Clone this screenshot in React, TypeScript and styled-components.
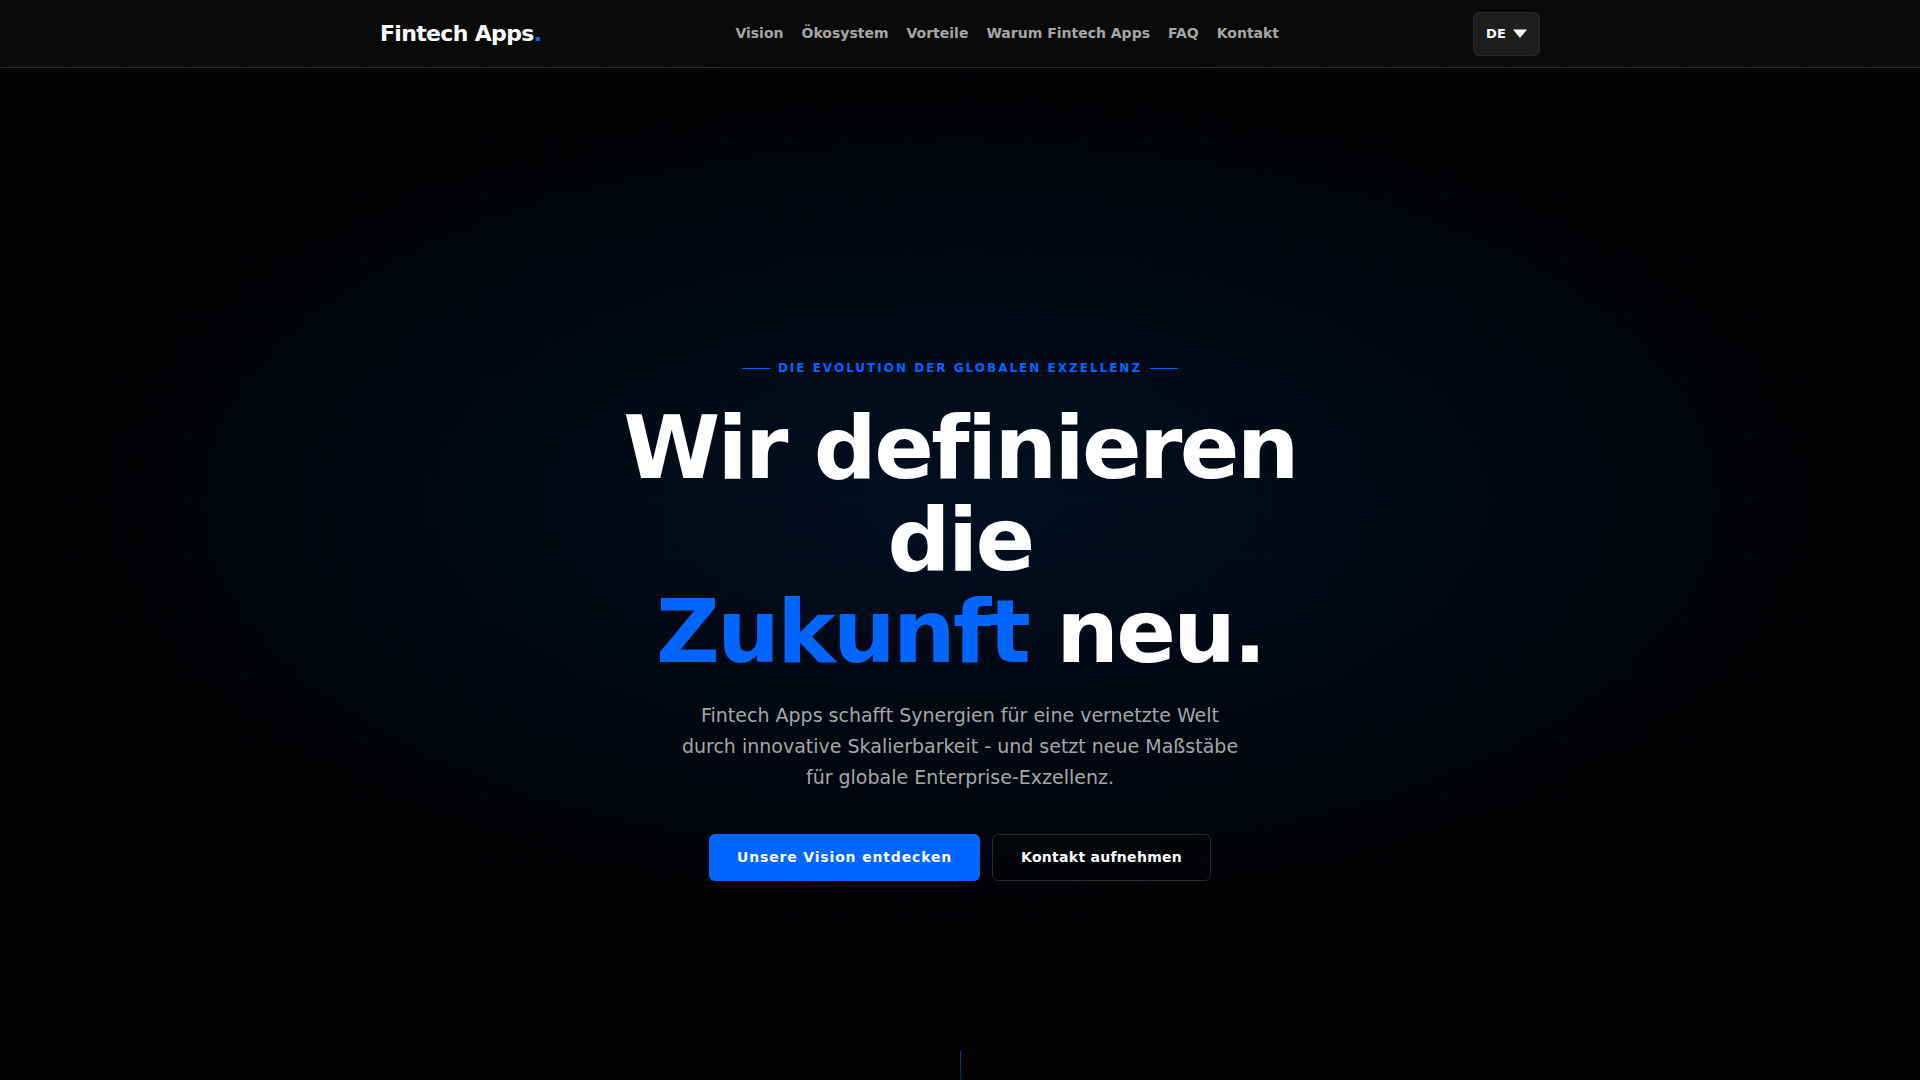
import React from "react";
import styled, { createGlobalStyle } from "styled-components";

const color = {
  accent: "#0066ff",
  text: "#ffffff",
  muted: "#a6a6a6",
  bar: "#0a0a0a",
  line: "#2a2a2a",
  field: "#1e1e1e",
};

const GlobalStyle = createGlobalStyle`
  *, *::before, *::after { box-sizing: border-box; }
  html { scrollbar-width: none; }
  body {
    margin: 0;
    background: #020202;
    color: ${color.text};
    font-family: "DejaVu Sans", sans-serif;
  }
`;

const Header = styled.header`
  position: sticky;
  top: 0;
  z-index: 10;
  background: ${color.bar};
  border-bottom: 1px solid ${color.line};
`;

const Bar = styled.div`
  max-width: 1200px;
  min-height: 67px;
  margin: 0 auto;
  padding: 0 20px;
  display: flex;
  align-items: center;
  justify-content: space-between;
`;

const Accent = styled.span`
  color: ${color.accent};
`;

const Logo = styled.a`
  color: ${color.text};
  font-size: 22px;
  font-weight: 700;
  letter-spacing: -0.03em;
  text-decoration: none;
`;

const Nav = styled.nav`
  display: flex;
  gap: 18px;
  padding-bottom: 2px;
`;

const NavLink = styled.a`
  color: ${color.muted};
  font-size: 14px;
  font-weight: 600;
  line-height: 20px;
  text-decoration: none;
`;

const LanguageField = styled.label`
  display: grid;
  grid-template-columns: 1fr;
  align-items: center;
  position: relative;
`;

const LanguageSelect = styled.select`
  appearance: none;
  width: 67px;
  height: 44px;
  padding: 0 12px;
  border: 1px solid ${color.line};
  border-radius: 6px;
  background: ${color.field};
  color: ${color.text};
  font: 700 13px/20px "DejaVu Sans", sans-serif;
  letter-spacing: 0.02em;
`;

const Caret = styled.svg`
  position: absolute;
  right: 13px;
  width: 14px;
  height: 9px;
  pointer-events: none;
`;

const Hero = styled.section`
  position: relative;
  min-height: 100vh;
  padding-top: 23px;
  display: flex;
  flex-direction: column;
  align-items: center;
  justify-content: center;
  text-align: center;
  background-image:
    linear-gradient(rgba(0, 102, 255, 0.025) 1px, transparent 1px),
    linear-gradient(90deg, rgba(0, 102, 255, 0.025) 1px, transparent 1px),
    radial-gradient(50% 42% at 50% 40%, rgba(0, 102, 255, 0.12) 0%, transparent 100%);
  background-size: 60px 60px, 60px 60px, 100% 100%;
  background-position: 7px 8px, 7px 8px, 0 0;
`;

const Content = styled.div`
  width: 100%;
  max-width: 820px;
  display: flex;
  flex-direction: column;
  align-items: center;
`;

const Eyebrow = styled.p`
  margin: 0 0 24px;
  display: flex;
  align-items: center;
  gap: 8px;
  color: ${color.accent};
  font-size: 12px;
  font-weight: 700;
  letter-spacing: 2px;
  line-height: 20px;
  text-transform: uppercase;

  &::before,
  &::after {
    content: "";
    width: 28px;
    height: 1px;
    background: ${color.accent};
  }
`;

const Title = styled.h1`
  margin: 0 0 22px;
  font-size: 88px;
  font-weight: 800;
  letter-spacing: -0.03em;
  line-height: 92px;
`;

const Lead = styled.p`
  max-width: 570px;
  margin: 0 0 41px;
  color: ${color.muted};
  font-size: 19px;
  line-height: 31px;
`;

const Actions = styled.div`
  display: flex;
  flex-wrap: wrap;
  justify-content: center;
  gap: 12px;
`;

const Button = styled.button<{ $primary?: boolean }>`
  min-height: 47px;
  padding: 0 28px 2px;
  border: ${(p) => (p.$primary ? "0" : `1px solid ${color.line}`)};
  border-radius: 6px;
  background: ${(p) => (p.$primary ? color.accent : "transparent")};
  color: ${color.text};
  font: 700 14px/20px "DejaVu Sans", sans-serif;
  letter-spacing: ${(p) => (p.$primary ? "0.06em" : "0.02em")};
  cursor: pointer;
`;

const ScrollHint = styled.div`
  position: absolute;
  bottom: 32px;
  left: 50%;
  width: 1px;
  height: 65px;
  background: linear-gradient(${color.accent}, transparent);
  opacity: 0.6;
`;

const links = [
  { label: "Vision", href: "#vision" },
  { label: "Ökosystem", href: "#oekosystem" },
  { label: "Vorteile", href: "#vorteile" },
  { label: "Warum Fintech Apps", href: "#warum" },
  { label: "FAQ", href: "#faq" },
  { label: "Kontakt", href: "#kontakt" },
];

export default function App() {
  return (
    <>
      <GlobalStyle />
      <Header>
        <Bar>
          <Logo href="#top">
            Fintech Apps<Accent>.</Accent>
          </Logo>
          <Nav>
            {links.map((link) => (
              <NavLink key={link.href} href={link.href}>
                {link.label}
              </NavLink>
            ))}
          </Nav>
          <LanguageField>
            <LanguageSelect aria-label="Sprache" defaultValue="de">
              <option value="de">DE</option>
            </LanguageSelect>
            <Caret viewBox="0 0 14 9" aria-hidden="true">
              <path d="M0 0.5h14L7 9z" fill="#fff" />
            </Caret>
          </LanguageField>
        </Bar>
      </Header>
      <main>
        <Hero id="top">
          <Content>
            <Eyebrow>Die Evolution der globalen Exzellenz</Eyebrow>
            <Title>
              Wir definieren die
              <br />
              <Accent>Zukunft</Accent> neu.
            </Title>
            <Lead>
              Fintech Apps schafft Synergien für eine vernetzte Welt durch innovative Skalierbarkeit -
              und setzt neue Maßstäbe für globale Enterprise-Exzellenz.
            </Lead>
            <Actions>
              <Button $primary>Unsere Vision entdecken</Button>
              <Button>Kontakt aufnehmen</Button>
            </Actions>
          </Content>
          <ScrollHint />
        </Hero>
      </main>
    </>
  );
}
